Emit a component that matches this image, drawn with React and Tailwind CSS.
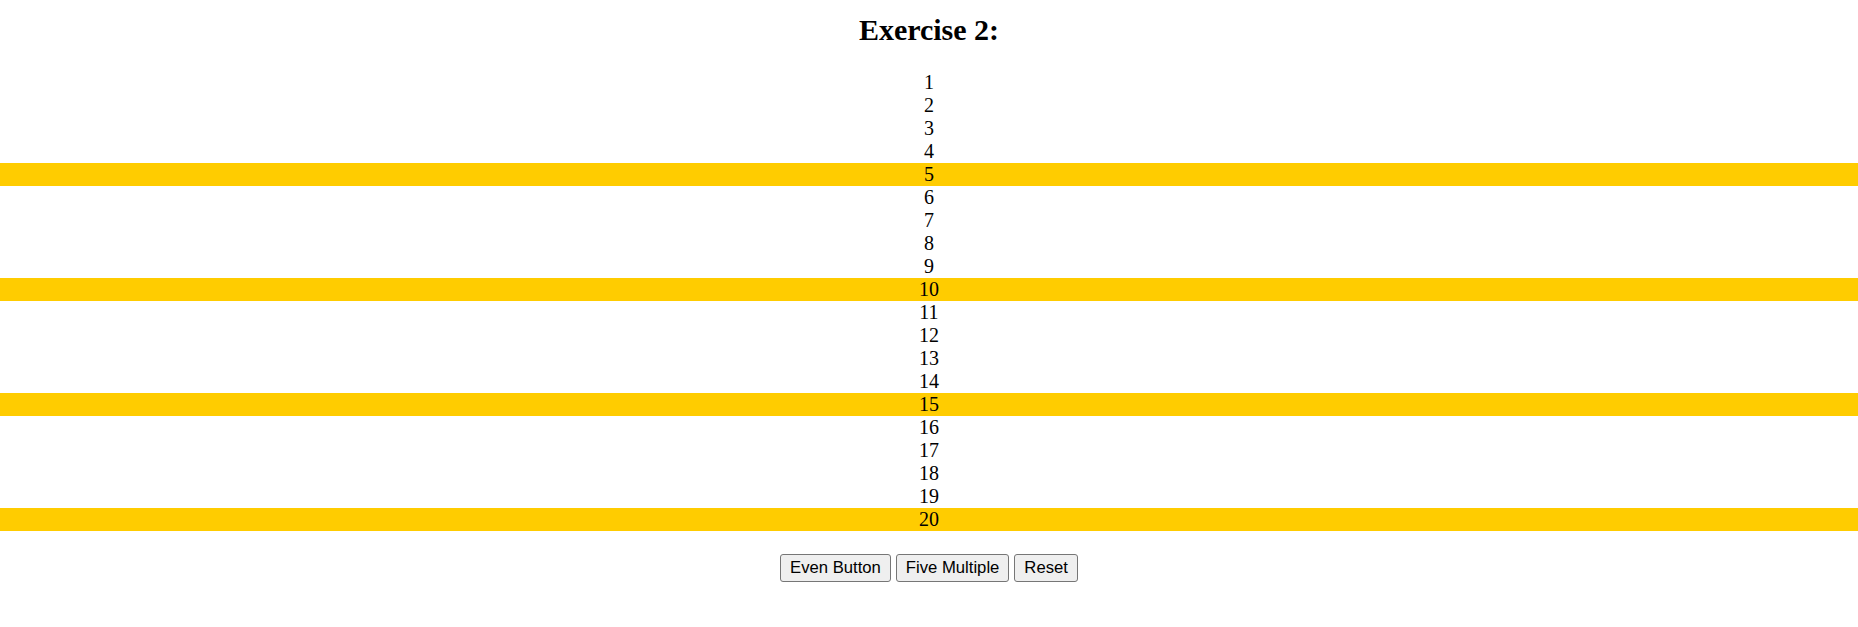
const numbers = Array.from({ length: 20 }, (_, i) => i + 1)

function ActionButton({ children }) {
  return (
    <button className="h-[28px] px-[9px] bg-[#efefef] border border-[#767676] rounded-[3px] text-[16.67px] leading-none text-black font-['Liberation_Sans',Arial,sans-serif] hover:bg-[#e5e5e5]">
      {children}
    </button>
  )
}

export default function App() {
  return (
    <div className="min-h-[627px] bg-white text-black font-['Liberation_Serif','Times_New_Roman',serif]">
      <h2 className="pt-[13px] mb-[24px] text-center text-[30px] font-bold leading-[34px]">Exercise 2:</h2>

      {/* Number list */}
      <div>
        {numbers.map((n) => (
          <div
            key={n}
            className={
              n % 5 === 0
                ? 'h-[23px] leading-[23px] text-[20px] text-center bg-[#ffcc00]'
                : 'h-[23px] leading-[23px] text-[20px] text-center'
            }
          >
            {n}
          </div>
        ))}
      </div>

      {/* Controls */}
      <div className="mt-[23px] flex justify-center gap-[5px]">
        <ActionButton>Even Button</ActionButton>
        <ActionButton>Five Multiple</ActionButton>
        <ActionButton>Reset</ActionButton>
      </div>
    </div>
  )
}
